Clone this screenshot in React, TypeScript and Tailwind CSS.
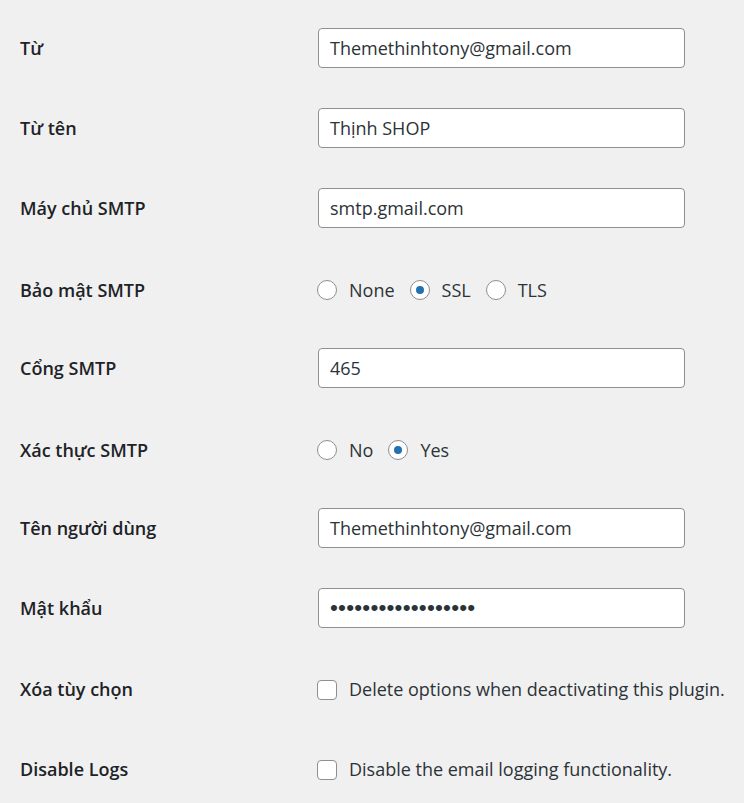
import React from "react";

type Row =
  | { label: string; kind: "text"; value: string }
  | { label: string; kind: "password"; value: string }
  | { label: string; kind: "radio"; options: string[]; checked: string }
  | { label: string; kind: "checkbox"; text: string };

const rows: Row[] = [
  { label: "Từ", kind: "text", value: "Themethinhtony@gmail.com" },
  { label: "Từ tên", kind: "text", value: "Thịnh SHOP" },
  { label: "Máy chủ SMTP", kind: "text", value: "smtp.gmail.com" },
  { label: "Bảo mật SMTP", kind: "radio", options: ["None", "SSL", "TLS"], checked: "SSL" },
  { label: "Cổng SMTP", kind: "text", value: "465" },
  { label: "Xác thực SMTP", kind: "radio", options: ["No", "Yes"], checked: "Yes" },
  { label: "Tên người dùng", kind: "text", value: "Themethinhtony@gmail.com" },
  { label: "Mật khẩu", kind: "password", value: "••••••••••••••••••" },
  { label: "Xóa tùy chọn", kind: "checkbox", text: "Delete options when deactivating this plugin." },
  { label: "Disable Logs", kind: "checkbox", text: "Disable the email logging functionality." },
];

function Radio({ on }: { on: boolean }) {
  return (
    <span className="w-[20px] h-[20px] rounded-full border border-[#8c8f94] bg-white flex items-center justify-center shrink-0">
      {on && <span className="w-[8px] h-[8px] rounded-full bg-[#2271b1]" />}
    </span>
  );
}

function Field({ row }: { row: Row }) {
  if (row.kind === "text" || row.kind === "password") {
    return (
      <div className="w-[367px] h-[40px] rounded-[4px] border border-[#8c8f94] bg-white px-[11px] flex items-center text-[#2c3338]">
        {row.kind === "password" ? (
          <span
            className="text-[22.5px] leading-none tracking-[0.2px] text-[#2c3338]"
            style={{ fontFamily: '"Liberation Sans", sans-serif' }}
          >
            {row.value}
          </span>
        ) : (
          row.value
        )}
      </div>
    );
  }
  if (row.kind === "radio") {
    return (
      <div className="flex items-center gap-[15px] ml-[-1px] text-[#2c3338]">
        {row.options.map((o) => (
          <label key={o} className="flex items-center gap-[12px]">
            <Radio on={o === row.checked} />
            <span>{o}</span>
          </label>
        ))}
      </div>
    );
  }
  return (
    <div className="flex items-center gap-[12px] ml-[-1px] text-[#2c3338]">
      <span className="w-[20px] h-[20px] rounded-[4px] border border-[#8c8f94] bg-white shrink-0" />
      <span>{row.text}</span>
    </div>
  );
}

export default function App() {
  return (
    <div
      className="min-h-screen bg-[#f0f0f0] pt-[8px] text-[18px]"
      style={{ fontFamily: '"Open Sans", "Noto Sans", sans-serif' }}
    >
      {rows.map((row) => {
        const shifted = row.kind === "radio" ? "pt-[4px]" : row.kind === "checkbox" ? "pt-[3px]" : "";
        return (
          <div key={row.label} className={`h-[80px] flex items-center ${shifted}`}>
            <div className="w-[318px] pl-[20px] font-semibold text-[18px] text-[#1d2327]">{row.label}</div>
            <Field row={row} />
          </div>
        );
      })}
    </div>
  );
}
